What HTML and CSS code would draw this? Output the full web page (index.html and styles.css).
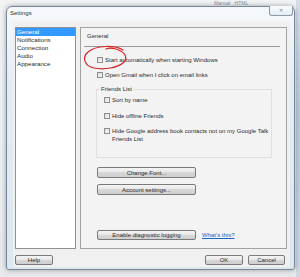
FILE: index.html
```html
<!DOCTYPE html>
<html lang="en">
<head>
    <meta charset="UTF-8">
    <title>Settings</title>
    <link rel="stylesheet" href="styles.css">
</head>
<body>

<div class="screen">
    <div class="behind-tabs">Manual &nbsp; HTML</div>
    <div class="behind-edge"></div>

    <div class="dialog">
        <div class="titlebar">
            <span class="title">Settings</span>
            <span class="close">&#x2715;</span>
        </div>

        <div class="client">
            <div class="main">
                <ul class="nav">
                    <li class="selected">General</li>
                    <li>Notifications</li>
                    <li>Connection</li>
                    <li>Audio</li>
                    <li>Appearance</li>
                </ul>

                <div class="panel">
                    <div class="panel-title">General</div>
                    <div class="sep"></div>

                    <div class="options">
                        <label class="check first"><span class="box"></span>Start automatically when starting Windows</label>
                        <label class="check second"><span class="box"></span>Open Gmail when I click on email links</label>

                        <div class="group">
                            <div class="legend">Friends List</div>
                            <label class="check g1"><span class="box"></span>Sort by name</label>
                            <label class="check g2"><span class="box"></span>Hide offline Friends</label>
                            <label class="check g3 tall"><span class="box"></span><span>Hide Google address book contacts not on my Google Talk<br>Friends List</span></label>
                        </div>

                        <button class="btn wide font-btn">Change Font...</button>
                        <button class="btn wide account-btn">Account settings...</button>
                    </div>

                    <div class="diag-row">
                        <button class="btn wide">Enable diagnostic logging</button>
                        <a href="#" class="link">What's this?</a>
                    </div>
                </div>
            </div>

            <div class="bottom">
                <button class="btn small">Help</button>
                <div class="right-btns">
                    <button class="btn small">OK</button>
                    <button class="btn small cancel">Cancel</button>
                </div>
            </div>
        </div>
    </div>

    <!-- red marker drawn around the first checkbox -->
    <svg class="marker" width="48" height="28" viewBox="0 0 48 28">
        <path d="M41 5 C33 0 14 0 6 7 C0 12 2 21 12 23 C22 25 36 23 42 17 C46 12 43 7 34 4 C30 3 26 3 24 4" fill="none" stroke="#d8262a" stroke-width="1.2" stroke-linecap="round"/>
    </svg>
</div>

</body>
</html>
```

FILE: styles.css
```css
body {
    margin: 0;
    font-family: "Liberation Sans", Arial, sans-serif;
    font-size: 6px;
    color: #2b2b2b;
    background-color: #eceef1;
}

.screen {
    position: relative;
    width: 300px;
    height: 277px;
    overflow: hidden;
    padding: 6px 0 0 6px;
    box-sizing: border-box;
    background: linear-gradient(#f2f3f5, #e7e9ec);
}

.behind-tabs {
    position: absolute;
    top: 0;
    left: 214px;
    color: #8a8f96;
    font-size: 5px;
    line-height: 6px;
}

.behind-edge {
    position: absolute;
    top: 0;
    right: 0;
    width: 4px;
    height: 277px;
    background: linear-gradient(#d6dde6, #b9c7d6 40%, #cfd8e2);
}

.dialog {
    position: relative;
    width: 289px;
    height: 264px;
    box-sizing: border-box;
    border: 1px solid #75879a;
    border-radius: 6px 6px 3px 3px;
    background: linear-gradient(#f6f9fc, #e4ecf3 30%, #dde7f0);
    box-shadow: 0 0 5px rgba(0, 0, 0, 0.35);
    display: flex;
    flex-direction: column;
    padding-bottom: 2px;
}

.titlebar {
    height: 14px;
    padding: 2px 0 0 3px;
    box-sizing: border-box;
    line-height: 8px;
}

.title {
    color: #333;
}

.close {
    position: absolute;
    top: -1px;
    right: 1px;
    width: 24px;
    height: 10px;
    box-sizing: border-box;
    border: 1px solid #8c9aa8;
    border-top: none;
    border-radius: 0 0 3px 3px;
    background: linear-gradient(#fafcfe, #e3ebf2);
    color: #7d8791;
    font-size: 5px;
    line-height: 9px;
    text-align: center;
}

.client {
    flex: 1;
    margin: 0 4px 0 6px;
    padding: 6px 3px 2px 2px;
    background-color: #f0f0f0;
    display: flex;
    flex-direction: column;
}

.main {
    flex: 1;
    display: flex;
    gap: 4px;
}

.nav {
    width: 61px;
    margin: 0;
    padding: 0;
    list-style: none;
    background-color: white;
    border: 1px solid #8d9196;
    box-sizing: border-box;
    font-size: 6.2px;
}

.nav li {
    height: 8px;
    line-height: 8px;
    padding-left: 1px;
    color: #2b2b2b;
}

.nav li.selected {
    background-color: #3399ff;
    color: white;
}

.panel {
    flex: 1;
    border: 1px solid #a2a2a2;
    background-color: #f3f3f3;
    display: flex;
    flex-direction: column;
}

.panel-title {
    margin: 4px 0 0 6px;
    line-height: 8px;
}

.sep {
    height: 1px;
    margin: 6px 6px 0 3px;
    background-color: #9a9a9a;
}

.options {
    padding-left: 16px;
    display: flex;
    flex-direction: column;
    align-items: flex-start;
}

.check {
    display: flex;
    align-items: center;
    gap: 2px;
    height: 8px;
    line-height: 8px;
}

.check.tall {
    align-items: flex-start;
    height: 16px;
}

.check.tall .box {
    margin-top: 1px;
}

.box {
    width: 6px;
    height: 6px;
    box-sizing: border-box;
    border: 1px solid #8e8f8f;
    background: linear-gradient(135deg, #d9dadc, #fbfbfb);
    flex-shrink: 0;
}

.first {
    margin-top: 9px;
}

.second {
    margin-top: 7px;
}

.group {
    align-self: stretch;
    margin: 10px 14px 0 -1px;
    padding: 0 0 14px 7px;
    border: 1px solid #dfdfdf;
    display: flex;
    flex-direction: column;
    align-items: flex-start;
}

.legend {
    margin: -5px 0 0 -4px;
    padding: 0 1px;
    line-height: 8px;
    background-color: #f3f3f3;
}

.g1 {
    margin-top: 3px;
}

.g2 {
    margin-top: 8px;
}

.g3 {
    margin-top: 7px;
}

.btn {
    font-family: "Liberation Sans", Arial, sans-serif;
    font-size: 6px;
    color: #2b2b2b;
    height: 10px;
    padding: 0;
    border: 1px solid #7a7a7a;
    border-radius: 2px;
    background: linear-gradient(#f4f4f4, #e8e8e8 45%, #d8d8d8 50%, #cfcfcf);
    line-height: 8px;
}

.btn.wide {
    width: 99px;
}

.btn.small {
    width: 38px;
}

.btn.cancel {
    width: 37px;
}

.font-btn {
    margin-top: 9px;
    height: 11px;
}

.account-btn {
    margin-top: 6px;
    height: 11px;
}

.diag-row {
    margin-top: auto;
    margin-bottom: 8px;
    padding-left: 16px;
    display: flex;
    align-items: center;
    gap: 6px;
}

.link {
    color: #1a66c8;
    text-decoration: underline;
}

.bottom {
    margin-top: 6px;
    display: flex;
    justify-content: space-between;
}

.right-btns {
    display: flex;
    gap: 5px;
    margin-right: 2px;
}

.marker {
    position: absolute;
    left: 82px;
    top: 45px;
}
```
